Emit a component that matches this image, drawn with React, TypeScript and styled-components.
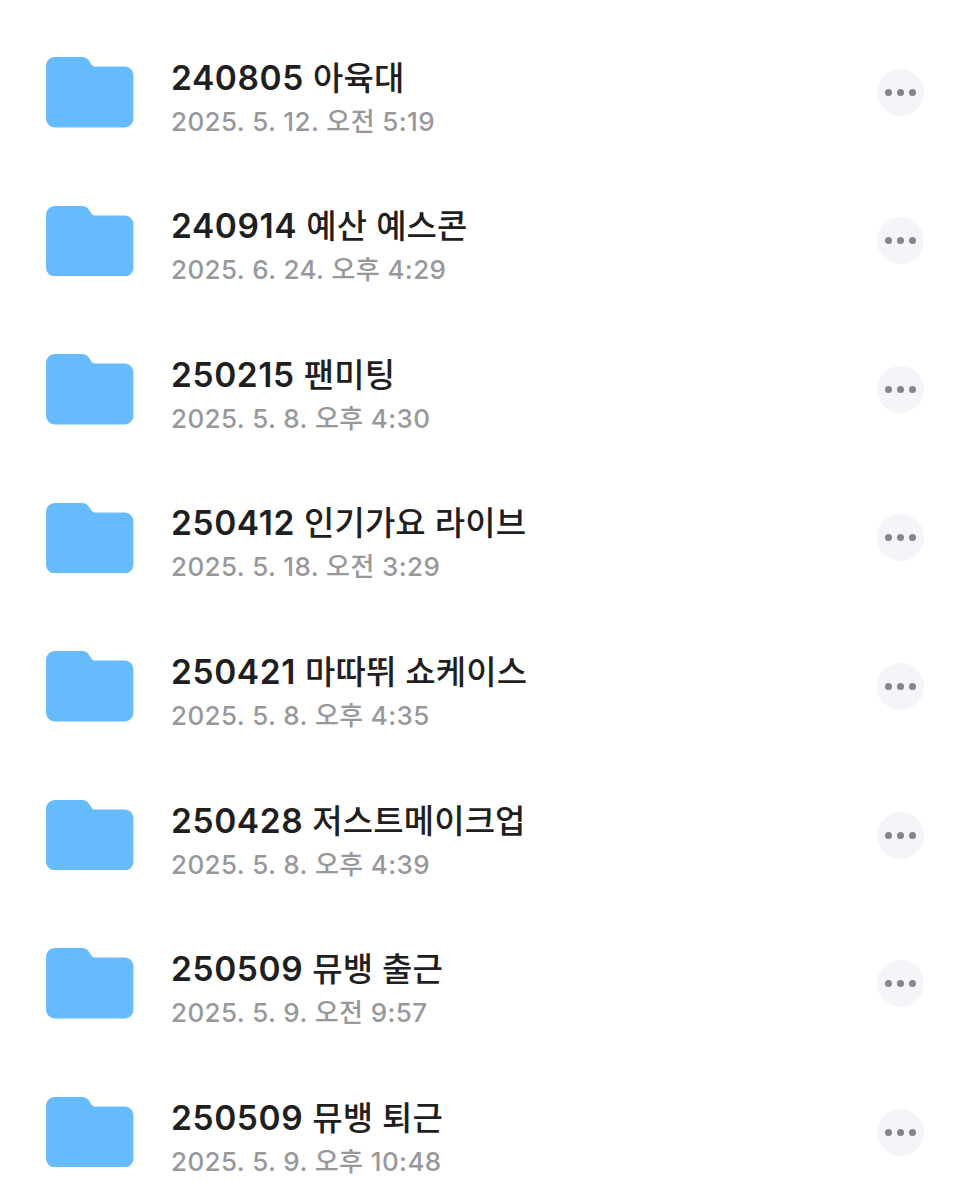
import styled, { createGlobalStyle } from 'styled-components';

const GlobalStyle = createGlobalStyle`
  html, body {
    margin: 0;
    padding: 0;
    background: #ffffff;
  }
  body {
    font-family: Inter, "Noto Sans CJK KR", sans-serif;
  }
`;

const S = {
  List: styled.ul`
    display: flex;
    flex-direction: column;
    height: 1200px;
    margin: 0;
    padding: 23px 38px 0 46px;
    box-sizing: border-box;
    overflow: hidden;
    list-style: none;
  `,

  Row: styled.li`
    display: flex;
    flex: none;
    align-items: center;
    height: 148.57px;
  `,

  FolderIcon: styled.svg`
    flex: none;
    width: 87.5px;
    height: 70.5px;
    margin-top: -10px;
  `,

  InfoBox: styled.div`
    display: flex;
    flex: 1;
    flex-direction: column;
    gap: 8px;
    margin-left: 37.5px;
    margin-top: 1px;
  `,

  Title: styled.div`
    color: #1f1f21;
    font-size: 33.5px;
    font-weight: 600;
    line-height: 40px;
    letter-spacing: 0.6px;
  `,

  TitleLabel: styled.span`
    font-size: 33px;
    font-weight: 500;
    letter-spacing: 0.1px;
  `,

  Date: styled.div`
    color: #98989b;
    font-size: 26px;
    font-weight: 500;
    line-height: 32px;
    letter-spacing: 0.4px;
  `,

  MoreButton: styled.button`
    display: flex;
    flex: none;
    align-items: center;
    justify-content: center;
    gap: 5px;
    width: 47px;
    height: 47px;
    margin-top: -10px;
    padding: 0;
    border: none;
    border-radius: 50%;
    background: #f4f5f9;
  `,

  Dot: styled.span`
    width: 7px;
    height: 7px;
    border-radius: 50%;
    background: #85858a;
  `,
};

const FOLDERS = [
  { id: '240805', label: '아육대', date: '2025. 5. 12. 오전 5:19' },
  { id: '240914', label: '예산 예스콘', date: '2025. 6. 24. 오후 4:29' },
  { id: '250215', label: '팬미팅', date: '2025. 5. 8. 오후 4:30' },
  { id: '250412', label: '인기가요 라이브', date: '2025. 5. 18. 오전 3:29' },
  { id: '250421', label: '마따뛰 쇼케이스', date: '2025. 5. 8. 오후 4:35' },
  { id: '250428', label: '저스트메이크업', date: '2025. 5. 8. 오후 4:39' },
  { id: '250509', label: '뮤뱅 출근', date: '2025. 5. 9. 오전 9:57' },
  { id: '250509', label: '뮤뱅 퇴근', date: '2025. 5. 9. 오후 10:48' },
];

function Folder() {
  return (
    <S.FolderIcon viewBox="0 0 88 71">
      <path
        d="M9 0H36C39.5 0 41.5 1.2 43 3.5L45.5 7.2C46.5 8.8 47.8 9.5 49.5 9.5H79C84 9.5 88 13.5 88 18.5V62C88 67 84 71 79 71H9C4 71 0 67 0 62V9C0 4 4 0 9 0Z"
        fill="#66bbfd"
      />
    </S.FolderIcon>
  );
}

function App() {
  return (
    <>
      <GlobalStyle />
      <S.List>
        {FOLDERS.map((folder) => (
          <S.Row key={folder.id + folder.label}>
            <Folder />
            <S.InfoBox>
              <S.Title>
                {folder.id} <S.TitleLabel>{folder.label}</S.TitleLabel>
              </S.Title>
              <S.Date>{folder.date}</S.Date>
            </S.InfoBox>
            <S.MoreButton aria-label="더보기">
              <S.Dot />
              <S.Dot />
              <S.Dot />
            </S.MoreButton>
          </S.Row>
        ))}
      </S.List>
    </>
  );
}

export default App;
